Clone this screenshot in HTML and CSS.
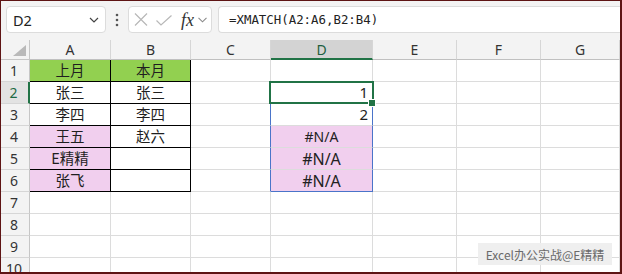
FILE: index.html
```html
<!DOCTYPE html>
<html lang="zh">
<head>
<meta charset="utf-8">
<link rel="stylesheet" href="styles.css">
</head>
<body>
<div class="frame">
  <div class="toolbar">
    <div class="namebox">
      <span class="nb-text">D2</span>
      <svg class="chev" width="10" height="6" viewBox="0 0 10 6"><path d="M1 1 L5 5 L9 1" stroke="#444" fill="none" stroke-width="1.2"/></svg>
    </div>
    <div class="dots">
      <svg width="4" height="14" viewBox="0 0 4 14"><circle cx="2" cy="2" r="1.3" fill="#555"/><circle cx="2" cy="7" r="1.3" fill="#555"/><circle cx="2" cy="12" r="1.3" fill="#555"/></svg>
    </div>
    <div class="fnbox">
      <svg class="ic-x" width="14" height="13" viewBox="0 0 14 13"><path d="M1 0.5 L13 12.5 M13 0.5 L1 12.5" stroke="#b8b8b8" stroke-width="1.2" fill="none"/></svg>
      <svg class="ic-ok" width="16" height="11" viewBox="0 0 16 11"><path d="M0.5 5.5 L5 10 L15.5 0.5" stroke="#b8b8b8" stroke-width="1.2" fill="none"/></svg>
      <span class="fx">fx</span>
      <svg class="chev-s" width="9" height="6" viewBox="0 0 9 6"><path d="M0.5 0.8 L4.5 4.8 L8.5 0.8" stroke="#8a8a8a" fill="none" stroke-width="1.1"/></svg>
    </div>
    <div class="formula">=XMATCH(A2:A6,B2:B4)</div>
  </div>

  <div class="sheet">
    <div class="corner"><svg width="13" height="11" viewBox="0 0 13 11"><path d="M13 0 L13 11 L0 11 Z" fill="#b9b9b9"/></svg></div>
    <div class="ch">A</div>
    <div class="ch">B</div>
    <div class="ch">C</div>
    <div class="ch ch-sel">D</div>
    <div class="ch">E</div>
    <div class="ch">F</div>
    <div class="ch">G</div>

    <div class="rh">1</div>
    <div class="c bk green">上月</div>
    <div class="c bk green">本月</div>
    <div class="c"></div>
    <div class="c"></div>
    <div class="c"></div>
    <div class="c"></div>
    <div class="c"></div>

    <div class="rh rh-sel">2</div>
    <div class="c bk">张三</div>
    <div class="c bk">张三</div>
    <div class="c spill-l"></div>
    <div class="c spill num sel">1</div>
    <div class="c"></div>
    <div class="c"></div>
    <div class="c"></div>

    <div class="rh">3</div>
    <div class="c bk">李四</div>
    <div class="c bk">李四</div>
    <div class="c spill-l"></div>
    <div class="c spill num">2</div>
    <div class="c"></div>
    <div class="c"></div>
    <div class="c"></div>

    <div class="rh">4</div>
    <div class="c bk pink">王五</div>
    <div class="c bk">赵六</div>
    <div class="c spill-l"></div>
    <div class="c spill pink na na-s">#N/A</div>
    <div class="c"></div>
    <div class="c"></div>
    <div class="c"></div>

    <div class="rh">5</div>
    <div class="c bk pink">E精精</div>
    <div class="c bk"></div>
    <div class="c spill-l"></div>
    <div class="c spill pink na">#N/A</div>
    <div class="c"></div>
    <div class="c"></div>
    <div class="c"></div>

    <div class="rh">6</div>
    <div class="c bk pink">张飞</div>
    <div class="c bk"></div>
    <div class="c spill-l"></div>
    <div class="c spill spill-end pink na">#N/A</div>
    <div class="c"></div>
    <div class="c"></div>
    <div class="c"></div>

    <div class="rh">7</div>
    <div class="c"></div><div class="c"></div><div class="c"></div><div class="c"></div><div class="c"></div><div class="c"></div><div class="c"></div>
    <div class="rh">8</div>
    <div class="c"></div><div class="c"></div><div class="c"></div><div class="c"></div><div class="c"></div><div class="c"></div><div class="c"></div>
    <div class="rh">9</div>
    <div class="c"></div><div class="c"></div><div class="c"></div><div class="c"></div><div class="c"></div><div class="c"></div><div class="c"></div>
    <div class="rh">10</div>
    <div class="c"></div><div class="c"></div><div class="c"></div><div class="c"></div><div class="c"></div><div class="c"></div><div class="c"></div>
  </div>

  <div class="watermark">Excel办公实战@E精精</div>
</div>
</body>
</html>
```

FILE: styles.css
```css
* { box-sizing: border-box; }
html, body { margin: 0; padding: 0; background: #ffffff; }
body { width: 622px; height: 274px; overflow: hidden; }

.frame {
  position: relative;
  width: 622px;
  height: 274px;
  border-top: 1px solid #5e1414;
  border-left: 1px solid #5e1414;
  border-right: 2px solid #5e1414;
  border-bottom: 2px solid #5e1414;
  overflow: hidden;
  background: #fff;
  font-family: "Noto Sans", "Noto Sans CJK SC", sans-serif;
}

/* toolbar */
.toolbar {
  height: 39px;
  background: #f3f3f3;
  display: flex;
  align-items: flex-start;
  padding: 5px 0 0 5px;
}
.namebox {
  width: 100px;
  height: 27px;
  background: #fff;
  border: 1px solid #dcdcdc;
  border-radius: 4px;
  display: flex;
  align-items: center;
  justify-content: space-between;
  padding: 0 6px 0 6px;
}
.nb-text { font-size: 14.5px; color: #222; }
.chev { margin-top: 1px; }
.dots {
  width: 22px;
  height: 27px;
  display: flex;
  align-items: center;
  justify-content: center;
}
.fnbox {
  width: 84px;
  height: 27px;
  background: #fff;
  border: 1px solid #dcdcdc;
  border-radius: 4px;
  display: flex;
  align-items: center;
  padding-left: 5px;
}
.ic-x { margin-right: 8px; }
.ic-ok { margin-right: 9px; margin-top: 1px; }
.fx {
  font-family: "Liberation Serif", "DejaVu Serif", serif;
  font-style: italic;
  font-size: 18px;
  color: #333;
  margin-right: 4px;
  line-height: 1;
}
.formula {
  flex: 1;
  margin-left: 6px;
  height: 27px;
  background: #fff;
  border: 1px solid #dcdcdc;
  border-right: none;
  border-radius: 4px 0 0 4px;
  font-family: "DejaVu Sans Mono", "Liberation Mono", monospace;
  font-size: 12.4px;
  color: #222;
  display: flex;
  align-items: center;
  padding-left: 10px;
}

/* sheet grid */
.sheet {
  display: grid;
  grid-template-columns: 29px 81px 80px 80px 102px 84px 84px 1fr;
  grid-template-rows: 20px;
  grid-auto-rows: 22px;
}
.corner {
  background: #f3f3f3;
  border-right: 1px solid #c6c6c6;
  border-bottom: 1px solid #c6c6c6;
  display: flex;
  align-items: flex-end;
  justify-content: flex-end;
  padding: 0 3px 3px 0;
}
.ch {
  background: #f3f3f3;
  border-right: 1px solid #d6d6d6;
  border-bottom: 1px solid #c0c0c0;
  font-size: 14px;
  color: #333;
  display: flex;
  align-items: center;
  justify-content: center;
}
.ch-sel {
  background: #d3d3d3;
  color: #1e5e3e;
  border-bottom: 2px solid #217346;
}
.rh {
  background: #f3f3f3;
  border-right: 1px solid #c6c6c6;
  border-bottom: 1px solid #d6d6d6;
  font-size: 14px;
  color: #333;
  display: flex;
  align-items: center;
  justify-content: center;
  padding-right: 2px;
}
.rh-sel {
  background: #e3e3e3;
  color: #1e6a44;
  border-right: 2px solid #217346;
}
.c {
  border-right: 1px solid #dcdcdc;
  border-bottom: 1px solid #dcdcdc;
  font-family: "Noto Sans CJK SC", "Noto Sans", sans-serif;
  font-size: 14.5px;
  color: #1f1f1f;
  display: flex;
  align-items: center;
  justify-content: center;
  line-height: 1;
}
.c.bk { border-right-color: #000; border-bottom-color: #000; }
.green { background: #92d050; }
.pink { background: #f1cfee; }
.spill-l { border-right-color: #4a74c9; }
.spill { border-right-color: #4a74c9; }
.spill-end { border-bottom-color: #4a74c9; }
.num {
  justify-content: flex-end;
  padding-right: 4px;
  font-family: "Noto Sans", sans-serif;
  font-size: 15px;
}
.na {
  font-family: "Noto Sans", sans-serif;
  font-size: 16px;
  color: #222;
}
.na-s { font-size: 14px; }

.sel { position: relative; }
.sel::after {
  content: "";
  position: absolute;
  left: -2px;
  top: -1px;
  right: -2px;
  bottom: -1px;
  border: 2px solid #217346;
}
.sel::before {
  content: "";
  position: absolute;
  right: -4px;
  bottom: -4px;
  width: 6px;
  height: 6px;
  background: #217346;
  border: 1px solid #fff;
  z-index: 2;
}

.watermark {
  position: absolute;
  left: 477px;
  top: 242px;
  width: 134px;
  height: 22px;
  background: rgba(238, 238, 238, 0.92);
  color: #6a6a6a;
  font-family: "Noto Sans CJK SC", "Noto Sans", sans-serif;
  font-size: 12px;
  display: flex;
  align-items: center;
  justify-content: center;
}
```
